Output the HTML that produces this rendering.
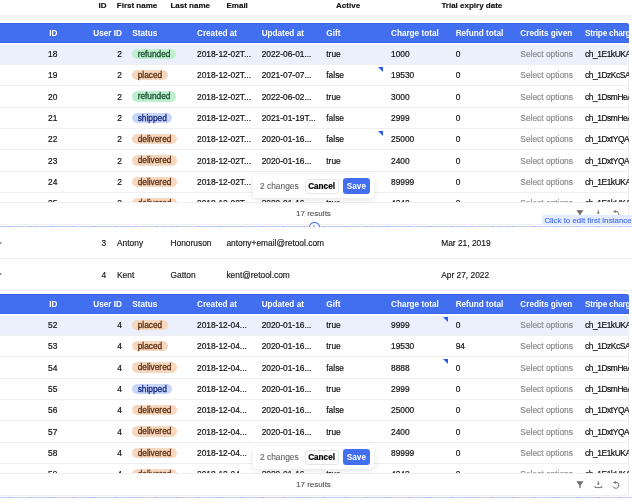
<!DOCTYPE html>
<html><head><meta charset="utf-8"><style>
*{margin:0;padding:0;box-sizing:border-box}
html,body{width:632px;height:500px;overflow:hidden;background:#fff}
#w{position:absolute;left:0;top:0;width:632px;height:500px;overflow:hidden;will-change:transform}
body{position:relative;font-family:"Liberation Sans",sans-serif;color:#111111;font-size:8.4px}
.abs{position:absolute;white-space:nowrap}
.oh{position:absolute;top:0px;-webkit-text-stroke:0.15px currentColor;left:0;width:632px;height:14px;line-height:11px;font-weight:bold;font-size:8.0px;color:#111}
.oh span,.orow span{position:absolute;white-space:nowrap}
.band{position:absolute;left:0;width:632px;top:14.6px;height:5.4px;background:linear-gradient(#f4f4f4 0,#f4f4f4 55%,#f9f9f9 55%,#f9f9f9 72%,#f1f1f1 72%)}
.cont{position:absolute;left:-20px;width:648.5px;border-right:1px solid #ededed;border-bottom:1px solid #f1f1f1;border-radius:0 4px 4px 0}
.hdr{position:absolute;left:-20px;width:648.5px;background:#426ef0;border-radius:0 3px 0 0;box-shadow:inset 0 1px 0 #3a66ee,inset 0 -1px 0 #3664ee;color:#fff;font-weight:bold;font-size:8.2px;overflow:hidden}
.hdr .c{margin-left:20px}
.rows{position:absolute;left:0;width:628.5px;overflow:hidden}
.row{position:absolute;left:0;width:628.5px;border-bottom:1px solid #efefef}
.row.hl{background:#ebf0fc;box-shadow:inset 0 1px 0 #f6f8fe}
.c{position:absolute;top:0;white-space:nowrap}
.row .c{top:0.4px;-webkit-text-stroke:0.2px currentColor}
.hdr .c{top:1.9px}
.r{text-align:right}
.g{color:#8c8c8c}
.badge{position:absolute;top:5.0px;-webkit-text-stroke:0.3px currentColor;height:10.5px;line-height:10.5px;border-radius:6px;padding:0 5.6px;font-size:8.3px;white-space:nowrap}
.refunded{background:#c0eed1;color:#18512f}
.placed,.delivered{background:#f6d7bf;color:#5e2e10}
.shipped{background:#c8d6fa;color:#17287f}
.tri{position:absolute;width:0;height:0;border-top:5.8px solid #2b57f3;border-left:5.8px solid transparent}
.fline{position:absolute;left:0;width:628.5px;height:1px;background:#f0f0f0}
.res{position:absolute;left:0;width:628.5px;text-align:center;color:#4f4f4f;padding-top:0px;padding-right:1.6px;font-size:8.05px;-webkit-text-stroke:0.1px currentColor}
.ico{position:absolute}
.pop{position:absolute;left:252.8px;width:120.8px;height:23.3px;background:#fff;border-radius:4px;box-shadow:0 1.5px 7px rgba(0,0,0,.11),0 0 1px rgba(0,0,0,.06)}
.pc{position:absolute;left:7.2px;top:0;line-height:23.3px;color:#5f5f5f;-webkit-text-stroke:0.1px currentColor}
.cancel{position:absolute;left:51.8px;top:3.9px;width:34px;height:15.2px;line-height:13.2px;border:1px solid #e6e6e6;border-radius:3px;text-align:center;font-weight:bold;color:#000;font-size:8.2px;-webkit-text-stroke:0.2px currentColor}
.save{position:absolute;left:90.2px;top:3.6px;width:26.8px;height:15.6px;line-height:17.4px;background:#426ef0;border-radius:3px;text-align:center;font-weight:bold;color:#fff;font-size:8.2px}
.dot{position:absolute;left:0;width:632px;height:1px;background:repeating-linear-gradient(90deg,#a9bdf4 0,#a9bdf4 1.2px,#d9e2fa 1.2px,#d9e2fa 2.1px)}
.handle{position:absolute;left:308.8px;width:11.1px;height:5.0px;border:1.1px solid #3f6cf0;border-bottom:none;border-radius:5.5px 5.5px 0 0/5px 5px 0 0;background:#fff}
.handle i{position:absolute;left:3.1px;top:1.9px;width:1.8px;height:2.6px;background:#a9bef6}
.orow{position:absolute;left:0;width:632px;border-bottom:1px solid #efefef;color:#161616;-webkit-text-stroke:0.15px currentColor}
.tip{position:absolute;left:542px;top:215.2px;width:92px;height:9.5px;line-height:11.6px;background:#e4ebfd;color:#4a74ee;font-size:7.9px;padding-left:2.4px;white-space:nowrap;border-radius:2px;-webkit-text-stroke:0.15px currentColor}
.chev{position:absolute;left:0;width:1px;height:1.8px;background:#8f8f8f;box-shadow:1px 0 0 #d6d6d6}
</style></head>
<body><div id="w">
<div class="oh"><span style="left:98.5px">ID</span><span style="left:116.8px">First name</span><span style="left:170.4px">Last name</span><span style="left:226.5px">Email</span><span style="left:336.1px">Active</span><span style="left:441.4px">Trial expiry date</span></div>
<div class="band"></div>
<div class="cont" style="top:22.6px;height:202.4px"></div>
<div class="hdr" style="top:22.6px;height:20.2px;line-height:20.2px">
<span class="c r" style="left:-2.04px;width:59.37px">ID</span>
<span class="c r" style="left:62.63px;width:59.37px">User ID</span>
<span class="c" style="left:132.3px">Status</span>
<span class="c" style="left:196.97px">Created at</span>
<span class="c" style="left:261.64px">Updated at</span>
<span class="c" style="left:326.31px">Gift</span>
<span class="c" style="left:390.98px">Charge total</span>
<span class="c" style="left:455.65px">Refund total</span>
<span class="c" style="left:520.32px">Credits given</span>
<span class="c" style="left:584.99px;letter-spacing:-0.2px">Stripe charge</span>
</div>
<div class="rows" style="top:43.6px;height:159.3px">
<div class="row hl" style="top:0px;height:21.35px;line-height:21.35px">
<span class="c r" style="left:-2.04px;width:59.37px">18</span>
<span class="c r" style="left:62.63px;width:59.37px">2</span>
<span class="badge refunded" style="left:132.1px">refunded</span>
<span class="c" style="left:196.97px">2018-12-02T...</span>
<span class="c" style="left:261.64px">2022-06-01...</span>
<span class="c" style="left:326.31px">true</span>
<span class="c" style="left:390.98px">1000</span>
<span class="c" style="left:455.65px">0</span>
<span class="c g" style="left:520.32px">Select options</span>
<span class="c" style="left:584.99px;letter-spacing:-0.42px">ch_1E1kUKA</span>
</div>
<div class="row" style="top:21.35px;height:21.35px;line-height:21.35px">
<span class="c r" style="left:-2.04px;width:59.37px">19</span>
<span class="c r" style="left:62.63px;width:59.37px">2</span>
<span class="badge placed" style="left:132.1px">placed</span>
<span class="c" style="left:196.97px">2018-12-02T...</span>
<span class="c" style="left:261.64px">2021-07-07...</span>
<span class="c" style="left:326.31px">false</span>
<span class="tri" style="left:377.98px;top:2.2px"></span>
<span class="c" style="left:390.98px">19530</span>
<span class="c" style="left:455.65px">0</span>
<span class="c g" style="left:520.32px">Select options</span>
<span class="c" style="left:584.99px;letter-spacing:-0.42px">ch_1DzKcSA</span>
</div>
<div class="row" style="top:42.7px;height:21.35px;line-height:21.35px">
<span class="c r" style="left:-2.04px;width:59.37px">20</span>
<span class="c r" style="left:62.63px;width:59.37px">2</span>
<span class="badge refunded" style="left:132.1px">refunded</span>
<span class="c" style="left:196.97px">2018-12-02T...</span>
<span class="c" style="left:261.64px">2022-06-02...</span>
<span class="c" style="left:326.31px">true</span>
<span class="c" style="left:390.98px">3000</span>
<span class="c" style="left:455.65px">0</span>
<span class="c g" style="left:520.32px">Select options</span>
<span class="c" style="left:584.99px;letter-spacing:-0.42px">ch_1DsmHeA</span>
</div>
<div class="row" style="top:64.05px;height:21.35px;line-height:21.35px">
<span class="c r" style="left:-2.04px;width:59.37px">21</span>
<span class="c r" style="left:62.63px;width:59.37px">2</span>
<span class="badge shipped" style="left:132.1px">shipped</span>
<span class="c" style="left:196.97px">2018-12-02T...</span>
<span class="c" style="left:261.64px">2021-01-19T...</span>
<span class="c" style="left:326.31px">false</span>
<span class="c" style="left:390.98px">2999</span>
<span class="c" style="left:455.65px">0</span>
<span class="c g" style="left:520.32px">Select options</span>
<span class="c" style="left:584.99px;letter-spacing:-0.42px">ch_1DsmHeA</span>
</div>
<div class="row" style="top:85.4px;height:21.35px;line-height:21.35px">
<span class="c r" style="left:-2.04px;width:59.37px">22</span>
<span class="c r" style="left:62.63px;width:59.37px">2</span>
<span class="badge delivered" style="left:132.1px">delivered</span>
<span class="c" style="left:196.97px">2018-12-02T...</span>
<span class="c" style="left:261.64px">2020-01-16...</span>
<span class="c" style="left:326.31px">false</span>
<span class="tri" style="left:377.98px;top:2.2px"></span>
<span class="c" style="left:390.98px">25000</span>
<span class="c" style="left:455.65px">0</span>
<span class="c g" style="left:520.32px">Select options</span>
<span class="c" style="left:584.99px;letter-spacing:-0.42px">ch_1DxtYQA</span>
</div>
<div class="row" style="top:106.75px;height:21.35px;line-height:21.35px">
<span class="c r" style="left:-2.04px;width:59.37px">23</span>
<span class="c r" style="left:62.63px;width:59.37px">2</span>
<span class="badge delivered" style="left:132.1px">delivered</span>
<span class="c" style="left:196.97px">2018-12-02T...</span>
<span class="c" style="left:261.64px">2020-01-16...</span>
<span class="c" style="left:326.31px">true</span>
<span class="c" style="left:390.98px">2400</span>
<span class="c" style="left:455.65px">0</span>
<span class="c g" style="left:520.32px">Select options</span>
<span class="c" style="left:584.99px;letter-spacing:-0.42px">ch_1DxtYQA</span>
</div>
<div class="row" style="top:128.1px;height:21.35px;line-height:21.35px">
<span class="c r" style="left:-2.04px;width:59.37px">24</span>
<span class="c r" style="left:62.63px;width:59.37px">2</span>
<span class="badge delivered" style="left:132.1px">delivered</span>
<span class="c" style="left:196.97px">2018-12-02T...</span>
<span class="c" style="left:261.64px">2020-01-16...</span>
<span class="c" style="left:326.31px">true</span>
<span class="c" style="left:390.98px">89999</span>
<span class="c" style="left:455.65px">0</span>
<span class="c g" style="left:520.32px">Select options</span>
<span class="c" style="left:584.99px;letter-spacing:-0.42px">ch_1E1kUKA</span>
</div>
<div class="row" style="top:149.45px;height:21.35px;line-height:21.35px">
<span class="c r" style="left:-2.04px;width:59.37px">25</span>
<span class="c r" style="left:62.63px;width:59.37px">2</span>
<span class="badge delivered" style="left:132.1px">delivered</span>
<span class="c" style="left:196.97px">2018-12-02T...</span>
<span class="c" style="left:261.64px">2020-01-16...</span>
<span class="c" style="left:326.31px">true</span>
<span class="c" style="left:390.98px">4242</span>
<span class="c" style="left:455.65px">0</span>
<span class="c g" style="left:520.32px">Select options</span>
<span class="c" style="left:584.99px;letter-spacing:-0.42px">ch_1E1kUKA</span>
</div>
</div>
<div class="fline" style="top:202.4px"></div>
<div class="res" style="top:202.9px;height:22.1px;line-height:22.1px">17 results</div>
<svg class="ico" style="left:575.5px;top:209.6px" width="8" height="8" viewBox="0 0 8 8"><path d="M0.3 0.3H7.5L4.6 3.9V7.6L3.2 6.6V3.9Z" fill="#6b6b6b"/></svg>
<svg class="ico" style="left:593.5px;top:209.6px" width="9" height="8" viewBox="0 0 9 8"><path d="M4.3 0.0V3.1" stroke="#6e6e6e" stroke-width="0.9"/><path d="M2.7 2.5H5.9L4.3 4.3Z" fill="#6e6e6e"/><path d="M1.0 4.9V6.6H7.8V4.9" fill="none" stroke="#6e6e6e" stroke-width="0.95"/></svg>
<svg class="ico" style="left:611.5px;top:209.6px" width="9" height="9" viewBox="0 0 9 9"><path d="M3.64 1.31A3.0 3.0 0 1 1 1.08 5.33" fill="none" stroke="#6e6e6e" stroke-width="1.0"/><path d="M1.0 1.5L3.8 0.1L3.8 2.9Z" fill="#6e6e6e"/></svg>
<div class="pop" style="top:174.7px"><span class="pc">2 changes</span><span class="cancel">Cancel</span><span class="save">Save</span></div>
<div class="dot" style="top:226px"></div>
<div class="handle" style="top:222px"><i></i></div>
<div class="tip">Click to edit first instance</div>
<div class="orow" style="top:226.9px;height:31.9px;line-height:32.5px"><span style="left:101.5px">3</span><span style="left:117px">Antony</span><span style="left:170.5px">Honoruson</span><span style="left:226.4px">antony+email@retool.com</span><span style="left:441.2px">Mar 21, 2019</span></div>
<div class="orow" style="top:258.8px;height:32.2px;line-height:32.2px"><span style="left:101.5px">4</span><span style="left:117px">Kent</span><span style="left:170.5px">Gatton</span><span style="left:226.4px">kent@retool.com</span><span style="left:441.2px">Apr 27, 2022</span></div>
<div class="chev" style="top:241.9px"></div><div class="chev" style="top:273.2px"></div>
<div class="cont" style="top:293.6px;height:202.4px"></div>
<div class="hdr" style="top:293.6px;height:20.2px;line-height:20.2px">
<span class="c r" style="left:-2.04px;width:59.37px">ID</span>
<span class="c r" style="left:62.63px;width:59.37px">User ID</span>
<span class="c" style="left:132.3px">Status</span>
<span class="c" style="left:196.97px">Created at</span>
<span class="c" style="left:261.64px">Updated at</span>
<span class="c" style="left:326.31px">Gift</span>
<span class="c" style="left:390.98px">Charge total</span>
<span class="c" style="left:455.65px">Refund total</span>
<span class="c" style="left:520.32px">Credits given</span>
<span class="c" style="left:584.99px;letter-spacing:-0.2px">Stripe charge</span>
</div>
<div class="rows" style="top:314.6px;height:159.3px">
<div class="row hl" style="top:0px;height:21.35px;line-height:21.35px">
<span class="c r" style="left:-2.04px;width:59.37px">52</span>
<span class="c r" style="left:62.63px;width:59.37px">4</span>
<span class="badge placed" style="left:132.1px">placed</span>
<span class="c" style="left:196.97px">2018-12-04...</span>
<span class="c" style="left:261.64px">2020-01-16...</span>
<span class="c" style="left:326.31px">true</span>
<span class="tri" style="left:442.65px;top:2.2px"></span>
<span class="c" style="left:390.98px">9999</span>
<span class="c" style="left:455.65px">0</span>
<span class="c g" style="left:520.32px">Select options</span>
<span class="c" style="left:584.99px;letter-spacing:-0.42px">ch_1E1kUKA</span>
</div>
<div class="row" style="top:21.35px;height:21.35px;line-height:21.35px">
<span class="c r" style="left:-2.04px;width:59.37px">53</span>
<span class="c r" style="left:62.63px;width:59.37px">4</span>
<span class="badge placed" style="left:132.1px">placed</span>
<span class="c" style="left:196.97px">2018-12-04...</span>
<span class="c" style="left:261.64px">2020-01-16...</span>
<span class="c" style="left:326.31px">true</span>
<span class="c" style="left:390.98px">19530</span>
<span class="c" style="left:455.65px">94</span>
<span class="c g" style="left:520.32px">Select options</span>
<span class="c" style="left:584.99px;letter-spacing:-0.42px">ch_1DzKcSA</span>
</div>
<div class="row" style="top:42.7px;height:21.35px;line-height:21.35px">
<span class="c r" style="left:-2.04px;width:59.37px">54</span>
<span class="c r" style="left:62.63px;width:59.37px">4</span>
<span class="badge delivered" style="left:132.1px">delivered</span>
<span class="c" style="left:196.97px">2018-12-04...</span>
<span class="c" style="left:261.64px">2020-01-16...</span>
<span class="c" style="left:326.31px">false</span>
<span class="tri" style="left:442.65px;top:2.2px"></span>
<span class="c" style="left:390.98px">8888</span>
<span class="c" style="left:455.65px">0</span>
<span class="c g" style="left:520.32px">Select options</span>
<span class="c" style="left:584.99px;letter-spacing:-0.42px">ch_1DsmHeA</span>
</div>
<div class="row" style="top:64.05px;height:21.35px;line-height:21.35px">
<span class="c r" style="left:-2.04px;width:59.37px">55</span>
<span class="c r" style="left:62.63px;width:59.37px">4</span>
<span class="badge shipped" style="left:132.1px">shipped</span>
<span class="c" style="left:196.97px">2018-12-04...</span>
<span class="c" style="left:261.64px">2020-01-16...</span>
<span class="c" style="left:326.31px">true</span>
<span class="c" style="left:390.98px">2999</span>
<span class="c" style="left:455.65px">0</span>
<span class="c g" style="left:520.32px">Select options</span>
<span class="c" style="left:584.99px;letter-spacing:-0.42px">ch_1DsmHeA</span>
</div>
<div class="row" style="top:85.4px;height:21.35px;line-height:21.35px">
<span class="c r" style="left:-2.04px;width:59.37px">56</span>
<span class="c r" style="left:62.63px;width:59.37px">4</span>
<span class="badge delivered" style="left:132.1px">delivered</span>
<span class="c" style="left:196.97px">2018-12-04...</span>
<span class="c" style="left:261.64px">2020-01-16...</span>
<span class="c" style="left:326.31px">false</span>
<span class="c" style="left:390.98px">25000</span>
<span class="c" style="left:455.65px">0</span>
<span class="c g" style="left:520.32px">Select options</span>
<span class="c" style="left:584.99px;letter-spacing:-0.42px">ch_1DxtYQA</span>
</div>
<div class="row" style="top:106.75px;height:21.35px;line-height:21.35px">
<span class="c r" style="left:-2.04px;width:59.37px">57</span>
<span class="c r" style="left:62.63px;width:59.37px">4</span>
<span class="badge delivered" style="left:132.1px">delivered</span>
<span class="c" style="left:196.97px">2018-12-04...</span>
<span class="c" style="left:261.64px">2020-01-16...</span>
<span class="c" style="left:326.31px">true</span>
<span class="c" style="left:390.98px">2400</span>
<span class="c" style="left:455.65px">0</span>
<span class="c g" style="left:520.32px">Select options</span>
<span class="c" style="left:584.99px;letter-spacing:-0.42px">ch_1DxtYQA</span>
</div>
<div class="row" style="top:128.1px;height:21.35px;line-height:21.35px">
<span class="c r" style="left:-2.04px;width:59.37px">58</span>
<span class="c r" style="left:62.63px;width:59.37px">4</span>
<span class="badge delivered" style="left:132.1px">delivered</span>
<span class="c" style="left:196.97px">2018-12-04...</span>
<span class="c" style="left:261.64px">2020-01-16...</span>
<span class="c" style="left:326.31px">true</span>
<span class="c" style="left:390.98px">89999</span>
<span class="c" style="left:455.65px">0</span>
<span class="c g" style="left:520.32px">Select options</span>
<span class="c" style="left:584.99px;letter-spacing:-0.42px">ch_1E1kUKA</span>
</div>
<div class="row" style="top:149.45px;height:21.35px;line-height:21.35px">
<span class="c r" style="left:-2.04px;width:59.37px">59</span>
<span class="c r" style="left:62.63px;width:59.37px">4</span>
<span class="badge delivered" style="left:132.1px">delivered</span>
<span class="c" style="left:196.97px">2018-12-04...</span>
<span class="c" style="left:261.64px">2020-01-16...</span>
<span class="c" style="left:326.31px">true</span>
<span class="c" style="left:390.98px">4242</span>
<span class="c" style="left:455.65px">0</span>
<span class="c g" style="left:520.32px">Select options</span>
<span class="c" style="left:584.99px;letter-spacing:-0.42px">ch_1E1kUKA</span>
</div>
</div>
<div class="fline" style="top:473.4px"></div>
<div class="res" style="top:473.9px;height:22.1px;line-height:22.1px">17 results</div>
<svg class="ico" style="left:575.5px;top:480.6px" width="8" height="8" viewBox="0 0 8 8"><path d="M0.3 0.3H7.5L4.6 3.9V7.6L3.2 6.6V3.9Z" fill="#6b6b6b"/></svg>
<svg class="ico" style="left:593.5px;top:480.6px" width="9" height="8" viewBox="0 0 9 8"><path d="M4.3 0.0V3.1" stroke="#6e6e6e" stroke-width="0.9"/><path d="M2.7 2.5H5.9L4.3 4.3Z" fill="#6e6e6e"/><path d="M1.0 4.9V6.6H7.8V4.9" fill="none" stroke="#6e6e6e" stroke-width="0.95"/></svg>
<svg class="ico" style="left:611.5px;top:480.6px" width="9" height="9" viewBox="0 0 9 9"><path d="M3.64 1.31A3.0 3.0 0 1 1 1.08 5.33" fill="none" stroke="#6e6e6e" stroke-width="1.0"/><path d="M1.0 1.5L3.8 0.1L3.8 2.9Z" fill="#6e6e6e"/></svg>
<div class="pop" style="top:445.7px"><span class="pc">2 changes</span><span class="cancel">Cancel</span><span class="save">Save</span></div>
<div class="dot" style="top:497px"></div>
</div></body></html>
